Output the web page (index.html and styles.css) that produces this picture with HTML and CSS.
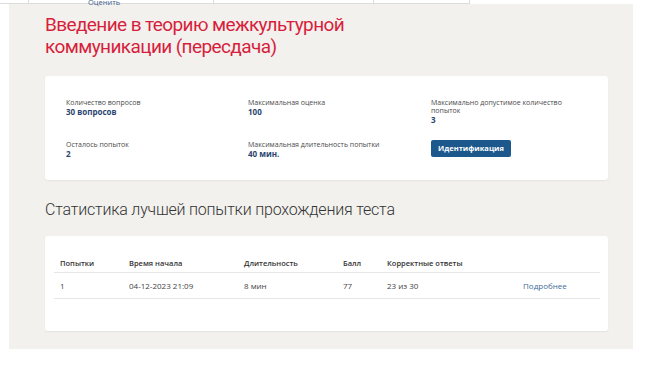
FILE: index.html
```html
<!DOCTYPE html>
<html lang="ru">
<head>
<meta charset="utf-8">
<title>Тест</title>
<link rel="stylesheet" href="styles.css">
</head>
<body>
<div class="topbar">
  <table class="toptable">
    <tr><td class="tc1"></td><td class="tc2"></td><td class="tc3"></td><td class="tc4"></td></tr>
  </table>
</div>
<main class="panel">
  <a class="rate" href="#">Оценить</a>
  <h1 class="title">Введение в теорию межкультурной коммуникации (пересдача)</h1>
  <section class="card info">
    <div class="grid">
      <div class="item"><div class="label">Количество вопросов</div><div class="value">30 вопросов</div></div>
      <div class="item"><div class="label">Максимальная оценка</div><div class="value">100</div></div>
      <div class="item"><div class="label">Максимально допустимое количество попыток</div><div class="value">3</div></div>
      <div class="item"><div class="label">Осталось попыток</div><div class="value">2</div></div>
      <div class="item"><div class="label">Максимальная длительность попытки</div><div class="value">40 мин.</div></div>
      <div class="item"><button class="btn" type="button">Идентификация</button></div>
    </div>
  </section>
  <h2 class="subtitle">Статистика лучшей попытки прохождения теста</h2>
  <section class="card stats">
    <table class="results">
      <thead>
        <tr>
          <th class="c-att">Попытки</th>
          <th class="c-start">Время начала</th>
          <th class="c-dur">Длительность</th>
          <th class="c-score">Балл</th>
          <th class="c-corr">Корректные ответы</th>
          <th class="c-more"></th>
        </tr>
      </thead>
      <tbody>
        <tr>
          <td>1</td>
          <td>04-12-2023 21:09</td>
          <td>8 мин</td>
          <td>77</td>
          <td>23 из 30</td>
          <td><a class="more" href="#">Подробнее</a></td>
        </tr>
      </tbody>
    </table>
  </section>
</main>
</body>
</html>
```

FILE: styles.css
```css
* { box-sizing: border-box; }
html, body { margin: 0; padding: 0; background: #ffffff; }
body { font-family: "Open Sans", "Noto Sans", sans-serif; color: #444; }

.topbar { height: 4px; overflow: hidden; }
.toptable { border-collapse: collapse; width: 470px; }
.toptable td { height: 3px; padding: 0; border-right: 1px solid #dcdcdc; border-bottom: 1px solid #dcdcdc; }
.tc1 { width: 29px; }
.tc2 { width: 185px; }
.tc3 { width: 160px; }
.tc4 { width: 96px; }

.panel {
  display: flow-root;
  width: 624px;
  height: 345px;
  margin-left: 9px;
  padding: 0 25px 0 36px;
  background: #f2f1ee;
}

.rate {
  display: block;
  margin: -7px 0 0 43px;
  font-size: 7.5px;
  line-height: 10px;
  color: #3d5f8c;
  text-decoration: none;
}

.title {
  margin: 7px 0 0;
  max-width: 360px;
  font-family: Roboto, "Noto Sans", sans-serif;
  font-weight: 400;
  font-size: 19px;
  letter-spacing: -0.6px;
  line-height: 22px;
  color: #d71f3d;
}

.card {
  background: #ffffff;
  border-radius: 3px;
  box-shadow: 0 1px 2px rgba(0, 0, 0, 0.06);
}

.info {
  margin-top: 18px;
  height: 104px;
  padding: 23px 21px 0;
}
.grid {
  display: grid;
  grid-template-columns: 182px 183px 140px;
  row-gap: 17px;
}
.label {
  font-size: 7px;
  line-height: 8px;
  color: #4a4a4a;
}
.value {
  font-size: 8px;
  line-height: 9px;
  font-weight: 700;
  color: #2a4470;
}
.btn {
  display: block;
  margin-top: -1px;
  width: 80px;
  height: 17px;
  padding: 0;
  border: 0;
  border-radius: 2px;
  background: #1c588c;
  color: #ffffff;
  font-family: "Open Sans", "Noto Sans", sans-serif;
  font-weight: 700;
  font-size: 7.5px;
  line-height: 17px;
}

.subtitle {
  margin: 20px 0 0;
  font-family: Roboto, "Noto Sans", sans-serif;
  font-weight: 300;
  font-size: 16px;
  letter-spacing: -0.2px;
  line-height: 20px;
  color: #333333;
}

.stats {
  margin-top: 16px;
  height: 95px;
  padding: 13px 9px 0;
}
.results {
  width: 546px;
  border-collapse: collapse;
  table-layout: fixed;
  font-size: 8px;
  line-height: 10px;
}
.results th {
  text-align: left;
  font-weight: 600;
  font-size: 7.5px;
  color: #333;
  padding: 9px 6px 4px;
  border-bottom: 1px solid #e6e6e6;
}
.results td {
  padding: 8px 6px 7px;
  color: #444;
  border-bottom: 1px solid #e6e6e6;
}
.c-att { width: 69px; }
.c-start { width: 115px; }
.c-dur { width: 99px; }
.c-score { width: 44px; }
.c-corr { width: 136px; }
.c-more { width: 83px; }
.more { color: #3f6b9c; text-decoration: none; }
```
